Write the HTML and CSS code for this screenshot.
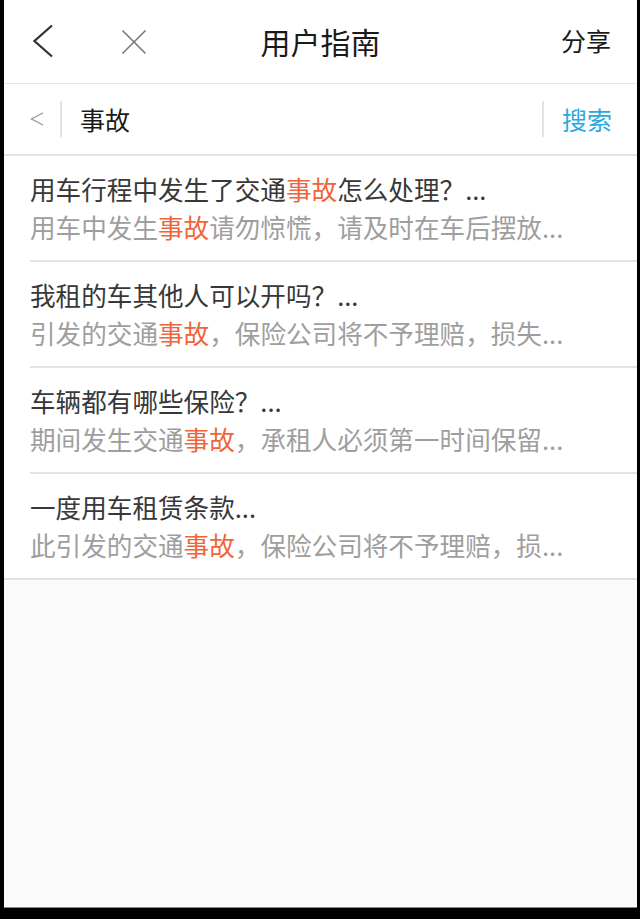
FILE: index.html
```html
<!DOCTYPE html>
<html lang="zh-CN">
<head>
  <meta charset="UTF-8">
  <meta name="viewport" content="width=device-width, initial-scale=1.0">
  <title>用户指南</title>
  <link rel="stylesheet" href="styles.css">
</head>
<body>
  <div class="screen">
    <header class="topbar">
      <div class="topbar-left">
        <a class="icon-btn back" href="#">
          <svg width="22" height="34" viewBox="0 0 22 34"><polyline points="19,1.5 1.5,17 19,32.5" fill="none" stroke="#333" stroke-width="2.2"/></svg>
        </a>
        <a class="icon-btn close" href="#">
          <svg width="26" height="26" viewBox="0 0 26 26"><path d="M1.5 1.5 L24.5 24.5 M24.5 1.5 L1.5 24.5" fill="none" stroke="#777" stroke-width="1.6"/></svg>
        </a>
      </div>
      <h1 class="title">用户指南</h1>
      <div class="topbar-right"><a class="share" href="#">分享</a></div>
    </header>

    <div class="searchbar">
      <a class="search-back" href="#">
        <svg width="14" height="14" viewBox="0 0 14 14"><polyline points="13,1 1.5,7 13,13" fill="none" stroke="#999" stroke-width="1.4"/></svg>
      </a>
      <input class="search-input" type="text" value="事故">
      <button class="search-btn" type="button">搜索</button>
    </div>

    <ul class="results">
      <li class="result">
        <div class="result-body">
          <div class="result-title">用车行程中发生了交通<em>事故</em>怎么处理？...</div>
          <div class="result-text">用车中发生<em>事故</em>请勿惊慌，请及时在车后摆放...</div>
        </div>
      </li>
      <li class="result">
        <div class="result-body">
          <div class="result-title">我租的车其他人可以开吗？...</div>
          <div class="result-text">引发的交通<em>事故</em>，保险公司将不予理赔，损失...</div>
        </div>
      </li>
      <li class="result">
        <div class="result-body">
          <div class="result-title">车辆都有哪些保险？...</div>
          <div class="result-text">期间发生交通<em>事故</em>，承租人必须第一时间保留...</div>
        </div>
      </li>
      <li class="result">
        <div class="result-body">
          <div class="result-title">一度用车租赁条款...</div>
          <div class="result-text">此引发的交通<em>事故</em>，保险公司将不予理赔，损...</div>
        </div>
      </li>
    </ul>
  </div>
</body>
</html>
```

FILE: styles.css
```css
* { box-sizing: border-box; }
html, body { margin: 0; padding: 0; }
body { background: #000; font-family: "Noto Sans CJK SC", "Noto Sans", sans-serif; color: #222; }
a { color: inherit; text-decoration: none; }

.screen { margin: 0 3px 0 4px; height: 908px; background: #fafafa; border-bottom: 1px solid #888; overflow: hidden; }

.topbar { display: grid; grid-template-columns: 1fr auto 1fr; align-items: center; height: 84px; background: #fff; border-bottom: 1px solid #e6e6e6; }
.topbar-left { display: flex; align-items: center; padding-left: 29px; gap: 66px; }
.icon-btn { display: flex; align-items: center; }
.back svg { display: block; margin-top: -2px; }
.close svg { display: block; }
.title { margin: -2px 0 0; font-size: 30px; font-weight: 400; color: #1a1a1a; line-height: 1; }
.topbar-right { display: flex; justify-content: flex-end; padding-right: 26px; }
.share { font-size: 25px; color: #1a1a1a; line-height: 1; margin-top: -2px; }

.searchbar { display: flex; align-items: center; height: 72px; background: #fff; border-bottom: 2px solid #e2e2e2; }
.search-back { display: flex; align-items: center; width: 58px; padding-left: 26px; height: 36px; border-right: 2px solid #e2e2e2; }
.search-input { flex: 1; border: none; outline: none; background: transparent; font-family: inherit; font-size: 25px; color: #1a1a1a; padding: 0 0 0 18px; height: 40px; }
.search-btn { height: 36px; border: none; border-left: 2px solid #e2e2e2; background: transparent; font-family: inherit; font-size: 25px; color: #29a9df; padding: 0 25px 0 18px; line-height: 36px; }

.results { list-style: none; margin: 0; padding: 0; background: #fff; border-bottom: 2px solid #e2e2e2; }
.result { padding-left: 26px; }
.result-body { padding: 15px 0 14px; border-bottom: 2px solid #e2e2e2; }
.result:last-child .result-body { border-bottom: none; }
.result-title { font-size: 25.6px; line-height: 36px; color: #383838; white-space: nowrap; }
.result-text { font-size: 25.6px; line-height: 39px; color: #9e9e9e; white-space: nowrap; }
.result em { font-style: normal; color: #f0643a; }
```
